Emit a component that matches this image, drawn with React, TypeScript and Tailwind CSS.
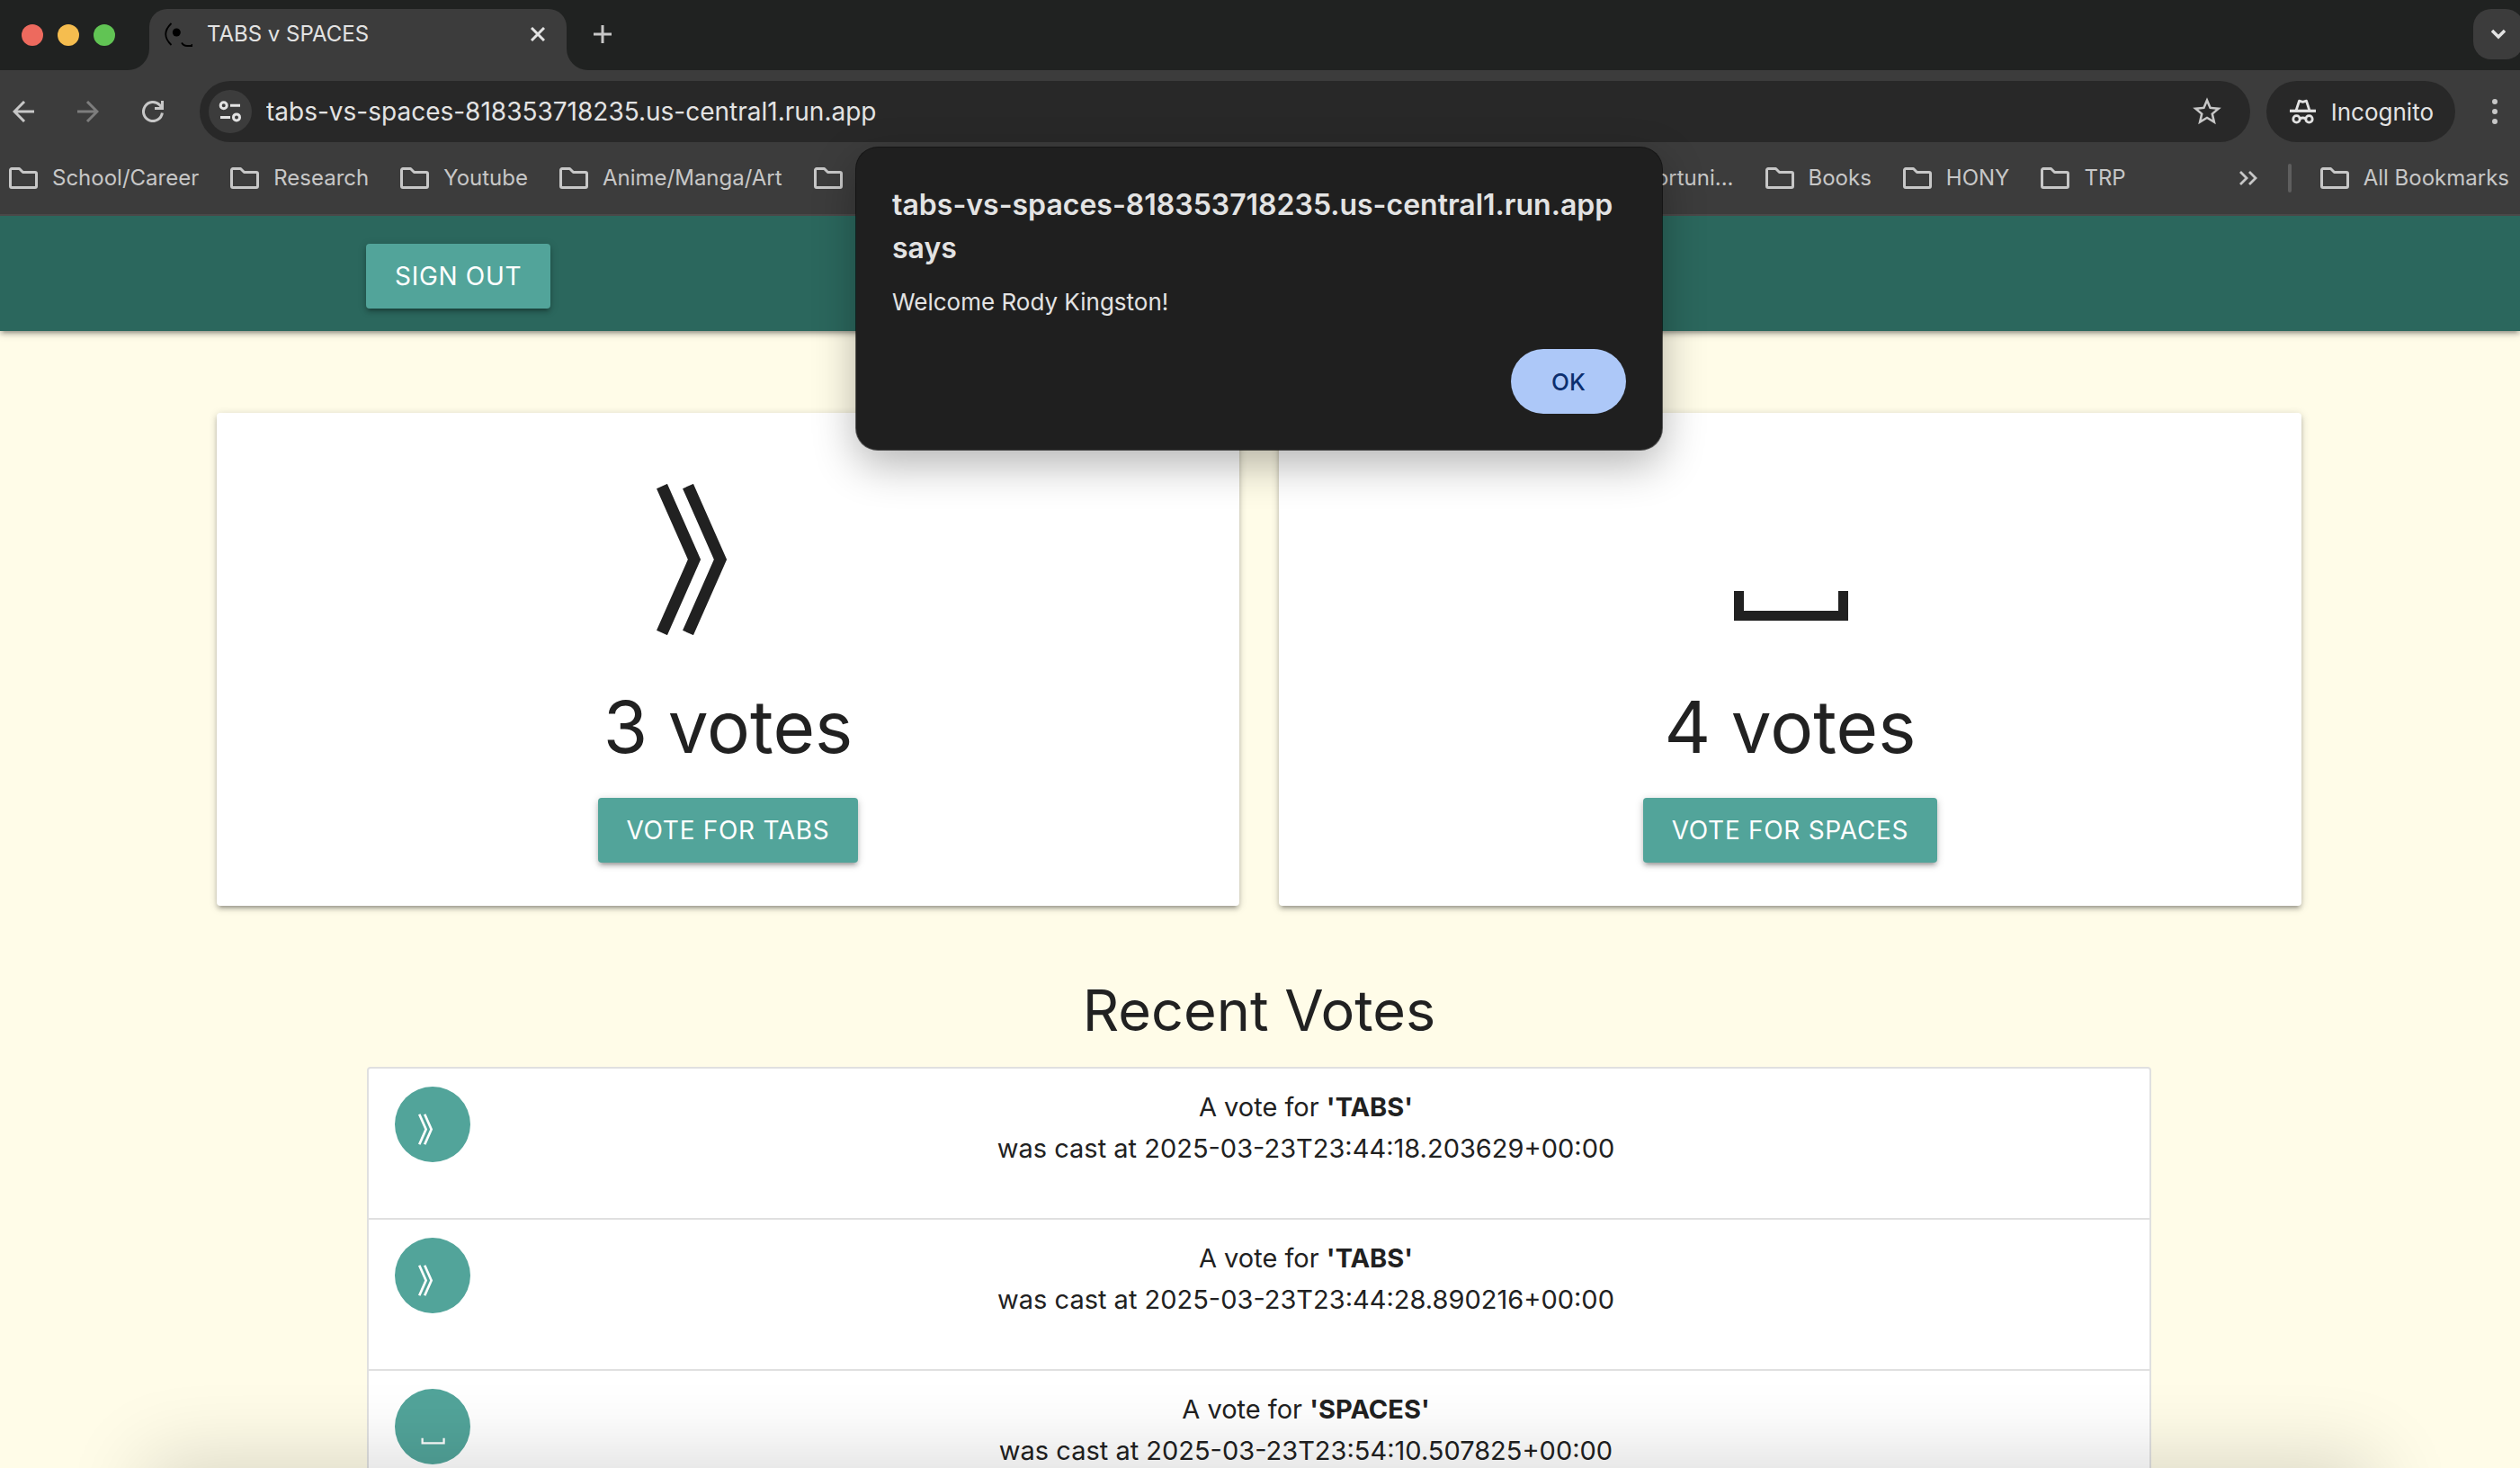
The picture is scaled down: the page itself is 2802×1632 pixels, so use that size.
import React from 'react';

type Choice = 'TABS' | 'SPACES';

const votes: { choice: Choice; time: string }[] = [
  { choice: 'TABS', time: '2025-03-23T23:44:18.203629+00:00' },
  { choice: 'TABS', time: '2025-03-23T23:44:28.890216+00:00' },
  { choice: 'SPACES', time: '2025-03-23T23:54:10.507825+00:00' },
];

const HOST = 'tabs-vs-spaces-818353718235.us-central1.run.app';

function FolderIcon() {
  return (
    <svg className="h-6 w-8 shrink-0" viewBox="0 0 32 24" fill="none" stroke="currentColor" strokeWidth="3" strokeLinejoin="round" aria-hidden="true">
      <path d="M3 1.5H11.5L15.5 5.5H29a1.5 1.5 0 0 1 1.5 1.5V21a1.5 1.5 0 0 1-1.5 1.5H3A1.5 1.5 0 0 1 1.5 21V3A1.5 1.5 0 0 1 3 1.5Z" />
    </svg>
  );
}

function ChoiceMark({ choice, className }: { choice: Choice; className: string }) {
  return (
    <svg className={className} viewBox="0 0 160 168" fill="none" stroke="currentColor" aria-hidden="true">
      {choice === 'TABS' ? (
        <path d="M6 2.5 42 84 6 165.5M35 2.5 71 84 35 165.5" strokeWidth="13" strokeMiterlimit="10" />
      ) : (
        <path d="M22.5 119V146.5H138.5V119" strokeWidth="11" />
      )}
    </svg>
  );
}

function Foot({ flip }: { flip?: boolean }) {
  return (
    <svg className="size-6 shrink-0 self-end" viewBox="0 0 24 24" fill="#3c3c3c" aria-hidden="true">
      {flip ? <path d="M0 0V24H24A24 24 0 0 1 0 0Z" /> : <path d="M24 0V24H0A24 24 0 0 0 24 0Z" />}
    </svg>
  );
}

function TabStrip() {
  return (
    <div className="flex h-[78px] overflow-hidden bg-[#202221] text-[#e3e3e3]">
      <div className="flex w-[142px] shrink-0 items-center gap-4 pl-6">
        <button aria-label="Close window" className="size-6 rounded-full bg-[#ed6a5e]" />
        <button aria-label="Minimise window" className="size-6 rounded-full bg-[#f5bd4f]" />
        <button aria-label="Zoom window" className="size-6 rounded-full bg-[#61c454]" />
      </div>
      <Foot />
      <div className="mt-[10px] flex w-[464px] items-center rounded-t-[20px] bg-[#3c3c3c] pr-6 pb-3 pl-4">
        <svg className="h-7 w-8 shrink-0" viewBox="0 0 32 28" fill="none" stroke="#000" strokeWidth="1.8" aria-hidden="true">
          <path d="M8.5 2Q-4 14 8.5 26" />
          <circle cx="14.3" cy="12" r="4.5" fill="#000" stroke="none" />
          <path d="M20 23.5Q22 27 26 27H31.5V25" />
        </svg>
        <span className="ml-4 flex-1 text-2xl">TABS v SPACES</span>
        <button aria-label="Close tab">
          <svg className="size-4" viewBox="0 0 16 16" stroke="currentColor" strokeWidth="3" aria-hidden="true">
            <path d="M1 1 15 15M15 1 1 15" />
          </svg>
        </button>
      </div>
      <Foot flip />
      <button aria-label="New tab" className="mb-0.5 ml-1.5 self-center text-[#c7c7c7]">
        <svg className="size-5" viewBox="0 0 20 20" stroke="currentColor" strokeWidth="3" aria-hidden="true">
          <path d="M10 0V20M0 10H20" />
        </svg>
      </button>
      <button aria-label="Search tabs" className="mt-[10px] -mr-1 ml-auto flex size-14 shrink-0 items-center justify-center rounded-[20px] bg-[#3c3c3c]">
        <svg className="size-4" viewBox="0 0 16 16" fill="none" stroke="currentColor" strokeWidth="3.5" aria-hidden="true">
          <path d="M1 4 8 11 15 4" />
        </svg>
      </button>
    </div>
  );
}

function Toolbar() {
  return (
    <div className="flex items-center bg-[#3c3c3c] pt-3 pr-[25px] pl-3.5 text-[#c7c7c7]">
      <div className="flex gap-12">
        <button aria-label="Back">
          <svg className="size-6" viewBox="0 0 24 24" fill="none" stroke="currentColor" strokeWidth="3" aria-hidden="true">
            <path d="M24 12H2M13 1 2 12 13 23" />
          </svg>
        </button>
        <button aria-label="Forward" className="text-[#7d7d7d]">
          <svg className="size-6" viewBox="0 0 24 24" fill="none" stroke="currentColor" strokeWidth="3" aria-hidden="true">
            <path d="M0 12H22M11 1 22 12 11 23" />
          </svg>
        </button>
        <button aria-label="Reload">
          <svg className="size-6" viewBox="0 0 24 24" fill="none" stroke="currentColor" strokeWidth="3" aria-hidden="true">
            <path d="M22.4 13.5A10.5 10.5 0 1 1 19.6 4.8L22 7.5" />
            <path d="M22.5 0V8.5H14" />
          </svg>
        </button>
      </div>
      <div className="ml-10 flex h-[68px] flex-1 items-center rounded-full bg-[#282828] pr-[29px] pl-2.5">
        <button aria-label="View site information" className="flex size-12 items-center justify-center rounded-full bg-[#3c3c3c] text-[#e3e3e3]">
          <svg className="size-[26px]" viewBox="0 0 26 26" fill="none" stroke="currentColor" strokeWidth="3" aria-hidden="true">
            <circle cx="5.7" cy="6.3" r="3.5" />
            <path d="M13 6.3H24M2 19.6H13" />
            <circle cx="20" cy="19.4" r="3.5" />
          </svg>
        </button>
        <input aria-label="Address" defaultValue={HOST} className="ml-4 min-w-0 flex-1 bg-transparent text-[28px] text-[#e3e3e3] outline-none" />
        <button aria-label="Bookmark this tab">
          <svg className="size-[38px]" viewBox="0 0 24 24" fill="currentColor" aria-hidden="true">
            <path d="M22 9.24l-7.19-.62L12 2 9.19 8.63 2 9.24l5.46 4.73L5.82 21 12 17.27 18.18 21l-1.63-7.03L22 9.24zM12 15.4l-3.76 2.27 1-4.28-3.32-2.88 4.38-.38L12 6.1l1.71 4.04 4.38.38-3.32 2.88 1 4.28L12 15.4z" />
          </svg>
        </button>
      </div>
      <button className="ml-[18px] flex h-[68px] items-center gap-4 rounded-full bg-[#282828] pr-6 pl-[26px] text-[26px] text-[#e3e3e3]">
        <svg className="h-7 w-[30px]" viewBox="0 0 30 28" fill="none" stroke="currentColor" strokeWidth="2.8" aria-hidden="true">
          <path d="M7 13 10.5 2.2 14.5 3.4 18.5 2.2 22 13" strokeLinejoin="round" />
          <path d="M0 13.3H29" strokeWidth="3.2" />
          <circle cx="7.5" cy="22.4" r="3.7" />
          <circle cx="21.5" cy="22.4" r="3.7" />
          <path d="M11 22Q14.5 20 18 22" />
        </svg>
        Incognito
      </button>
      <button aria-label="Menu" className="ml-[41px]">
        <svg className="h-7 w-1.5" viewBox="0 0 6 28" fill="currentColor" aria-hidden="true">
          <circle cx="3" cy="3" r="3" />
          <circle cx="3" cy="14" r="3" />
          <circle cx="3" cy="25" r="3" />
        </svg>
      </button>
    </div>
  );
}

function Bookmark({ label }: { label: string }) {
  return (
    <button className="flex items-center gap-4 whitespace-nowrap">
      <FolderIcon />
      {label}
    </button>
  );
}

function BookmarksBar() {
  return (
    <nav aria-label="Bookmarks" className="flex h-[82px] items-center border-b-2 border-[#4a4848] bg-[#3c3c3c] pr-3 pl-2.5 text-2xl text-[#c7c7c7]">
      <div className="flex flex-1 gap-[35px]">
        <Bookmark label="School/Career" />
        <Bookmark label="Research" />
        <Bookmark label="Youtube" />
        <Bookmark label="Anime/Manga/Art" />
        <button aria-label="Folder">
          <FolderIcon />
        </button>
      </div>
      <div className="flex gap-[35px]">
        <Bookmark label="Opportuni..." />
        <Bookmark label="Books" />
        <Bookmark label="HONY" />
        <Bookmark label="TRP" />
      </div>
      <button aria-label="More bookmarks" className="ml-[126px]">
        <svg className="h-4 w-5" viewBox="0 0 20 16" fill="none" stroke="currentColor" strokeWidth="2.8" aria-hidden="true">
          <path d="M1 1 8 8 1 15M11 1 18 8 11 15" />
        </svg>
      </button>
      <div className="mr-8 ml-[34px] h-8 w-1 rounded-full bg-[#5e5e5e]" />
      <Bookmark label="All Bookmarks" />
    </nav>
  );
}

function TealButton({ children }: { children: React.ReactNode }) {
  return (
    <button className="h-[72px] rounded-[4px] bg-[#52a49a] px-8 text-[28px] tracking-wide text-white shadow-[0_4px_4px_0_rgba(0,0,0,0.14),0_6px_2px_-4px_rgba(0,0,0,0.12),0_2px_10px_0_rgba(0,0,0,0.2)]">
      {children}
    </button>
  );
}

function VoteCard({ choice, count }: { choice: Choice; count: number }) {
  return (
    <section className="flex flex-1 flex-col items-center rounded-[4px] bg-white pt-[79px] pb-12 shadow-[0_4px_4px_0_rgba(0,0,0,0.14),0_6px_2px_-4px_rgba(0,0,0,0.12),0_2px_10px_0_rgba(0,0,0,0.2)]">
      <ChoiceMark choice={choice} className="h-[168px] w-40" />
      <h3 className="mt-[54px] mb-[31px] text-[80px] leading-[96px]">{count} votes</h3>
      <TealButton>VOTE FOR {choice}</TealButton>
    </section>
  );
}

function AlertDialog() {
  return (
    <div className="absolute inset-x-0 top-[164px] flex justify-center pr-0.5">
      <div
        role="alertdialog"
        aria-labelledby="alert-title"
        aria-describedby="alert-message"
        className="w-[896px] rounded-[24px] bg-[#1f1f1f] py-10 pr-10 pl-10 text-[#e3e3e3] shadow-[0_0_0_1px_rgba(0,0,0,0.6),0_16px_48px_0_rgba(0,0,0,0.3)]"
      >
        <h1 id="alert-title" className="text-[32px] leading-[48px] font-semibold">{HOST} says</h1>
        <p id="alert-message" className="mt-4 text-[26px] leading-10">Welcome Rody Kingston!</p>
        <div className="mt-8 flex justify-end">
          <button className="h-[72px] w-32 rounded-full bg-[#adc8f8] text-[26px] font-medium text-[#0c2e6e]">OK</button>
        </div>
      </div>
    </div>
  );
}

export default function App() {
  return (
    <div className="relative flex h-screen flex-col overflow-hidden bg-[#fffce8] font-['Inter',sans-serif] text-[#212121]">
      <TabStrip />
      <Toolbar />
      <BookmarksBar />
      <div className="min-h-0 flex-1 overflow-hidden">
        <header className="h-32 bg-[#2b675d] pt-[31px] pl-[407px] shadow-[0_4px_4px_0_rgba(0,0,0,0.14),0_6px_2px_-4px_rgba(0,0,0,0.12),0_2px_10px_0_rgba(0,0,0,0.2)]">
          <TealButton>SIGN OUT</TealButton>
        </header>
        <main className="pt-[91px]">
          <div className="flex gap-11 pr-[243px] pl-[241px]">
            <VoteCard choice="TABS" count={3} />
            <VoteCard choice="SPACES" count={4} />
          </div>
          <div className="pr-[410px] pl-[408px]">
            <h2 className="mt-[76px] mb-[23px] text-center text-[63px] leading-[80px]">Recent Votes</h2>
            <ul className="rounded-[4px] border-2 border-[#e0e0e0] bg-white">
              {votes.map((v) => (
                <li key={v.time} className="flex h-[168px] gap-[31px] border-b-2 border-[#e0e0e0] pt-5 pr-10 pl-[29px] last:border-b-0">
                  <span className="flex size-[84px] shrink-0 rounded-full bg-[#52a49a] pt-[30px] pl-[26px] text-white">
                    <ChoiceMark choice={v.choice} className="h-[35px] w-[33px]" />
                  </span>
                  <p className="flex-1 text-center text-[29px] leading-[46px]">
                    A vote for <b>'{v.choice}'</b>
                    <br />
                    was cast at {v.time}
                  </p>
                </li>
              ))}
            </ul>
          </div>
        </main>
      </div>
      <AlertDialog />
      <div className="pointer-events-none absolute inset-x-[170px] top-full h-20 shadow-[0_0_90px_8px_rgba(0,0,0,0.16)]" />
    </div>
  );
}
